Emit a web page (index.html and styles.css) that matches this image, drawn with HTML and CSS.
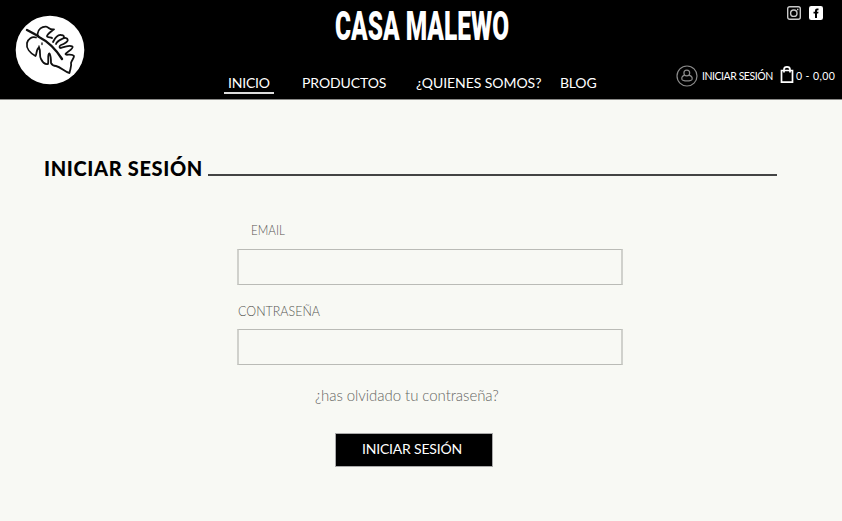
FILE: index.html
```html
<!DOCTYPE html>
<html lang="es">
<head>
<meta charset="utf-8">
<title>Casa Malewo</title>
<link rel="stylesheet" href="styles.css">
</head>
<body>
<header class="header">
  <a class="logo">
    <svg width="70" height="70" viewBox="0 0 70 70" fill="none" stroke="#111" stroke-linecap="round" stroke-linejoin="round">
      <circle cx="35" cy="35" r="34.3" fill="#fff" stroke="none"/>
      <path stroke-width="1.8" d="M22.500 19C23 14 27 11.500 31 11.700C34 12 34 15 39 14.300C37 16 33 18 32 21C32 23 36 22 37 23M38 27C40 23 43 19.500 46 20C49 20 50 22 48 23.500C45 25 42 26 41 29M48 23.500C50 22.500 52.500 23 52.500 24.500C54 26 49 29 46 30C44 31 44 33 46 33C49 32 54 29.500 57.500 31.500C59 34 51 37 50.500 39C50.500 41 57 38 59 41C59 43 57 45 56 48C57 51 55 54 54.500 58C50 57 46 52 41 51C38 51 37 50 36 48C36 45 36 41 34.500 38.500C32 39 34 46 33 49C29 50 27 46 26 44C24 41 26 36 24 32.500C21 34 22 39 20.500 41C15 38 11 33 12 28C13 24 17 21 21 22.500"/>
      <path stroke-width="2.4" d="M12 15C16 17 20 19 24 22C32 26 40 33 47 44"/>
      <path stroke-width="1.3" d="M27 28V29.500M24 31V32.500M22.500 19L24 22"/>
    </svg>
  </a>
  <div class="center">
    <h1 class="brand">CASA MALEWO</h1>
    <nav class="nav">
      <a class="inicio">INICIO</a>
      <a class="productos">PRODUCTOS</a>
      <a class="quienes">¿QUIENES SOMOS?</a>
      <a class="blog">BLOG</a>
    </nav>
  </div>
  <div class="side">
    <div class="social">
      <svg width="14" height="14" viewBox="0 0 14 14" fill="none" stroke="#c9c9c9" stroke-width="1.4"><rect x=".7" y=".7" width="12.600" height="12.600" rx="2"/><circle cx="6.800" cy="7.200" r="3.200"/><path d="M10 3.500h1.400"/></svg>
      <svg width="14" height="14" viewBox="0 0 14 14"><rect width="14" height="14" rx="2.200" fill="#fff"/><path fill="#000" d="M6 12V7.500H4.500V5.700H6V4.500Q6 2.500 8 2.500H9.500V4.200H8.700Q8 4.200 8 5V5.700H9.500L9.200 7.500H8V12Z"/></svg>
    </div>
    <div class="account">
      <svg class="user" width="22" height="22" viewBox="0 0 22 22" fill="none" stroke="#8b8b8b" stroke-width="1.200"><circle cx="11" cy="11" r="10"/><circle cx="10.800" cy="8" r="2.900"/><path d="M8.800 10.200C5.800 11 5.500 13 6 14.500C7 16.400 15 16.400 16 14.500C16.500 13 16.200 11 12.800 10.200"/></svg>
      <a class="login">INICIAR SESIÓN</a>
      <svg class="bag" width="14" height="18" viewBox="0 0 14 18" fill="none" stroke="#fff" stroke-width="1.700"><path d="M1.500 4.500H12.500V16.200H1.500ZM4 6.500V3.500C4 0 10 0 10 3.500V6.500"/></svg>
      <span class="total">0 - 0,00</span>
    </div>
  </div>
</header>
<main class="main">
  <div class="heading"><h2>INICIAR SESIÓN</h2><span class="rule"></span></div>
  <form class="form">
    <label class="label email" for="email">EMAIL</label>
    <input class="field" id="email" type="email">
    <label class="label password" for="password">CONTRASEÑA</label>
    <input class="field" id="password" type="password">
    <a class="forgot">¿has olvidado tu contraseña?</a>
    <button class="submit" type="button"><span>INICIAR SESIÓN</span></button>
  </form>
</main>
</body>
</html>
```
FILE: styles.css
```css
* { box-sizing: border-box; }
body { margin: 0; height: 521px; overflow: hidden; background: #f8f9f4; font-family: Lato, "Open Sans", sans-serif; }
a, span { white-space: nowrap; }
svg { display: block; flex: none; }
.header { display: grid; grid-template-columns: 224px 452px 166px; height: 100px; background: #000; color: #fff; border-bottom: 1px solid #8a8a88; }
.logo { padding: 15px 0 0 15px; }
.center { min-width: 0; }
.brand { margin: 2px 0 0 111px; width: 0; height: 71px; white-space: nowrap; font: 900 41px/48px Roboto, sans-serif; transform: scaleX(.596); transform-origin: 0 0; }
.nav { display: flex; font-size: 14px; line-height: 20px; }
.nav a { height: 21px; }
.inicio { width: 50px; padding-left: 4px; margin-right: 28px; border-bottom: 2px solid #ddd; letter-spacing: -.2px; }
.productos { width: 114px; letter-spacing: -.1px; }
.quienes { width: 144px; letter-spacing: -.05px; }
.blog { letter-spacing: -.2px; }
.social { display: flex; gap: 8px; padding: 6px 0 0 111px; }
.account { display: flex; align-items: center; height: 22px; margin-top: 45px; font-size: 10.5px; }
.login { width: 78px; padding-left: 4px; letter-spacing: -.45px; }
.bag { margin: -2px 0 0 4px; }
.total { padding-left: 2px; letter-spacing: .4px; }
.main { padding: 56px 65px 0 44px; }
.heading { display: flex; height: 24px; }
.heading h2 { margin: 0; width: 164px; font-size: 20px; line-height: 24px; font-weight: 900; letter-spacing: .65px; white-space: nowrap; color: #000; }
.rule { flex: 1; height: 2px; margin-top: 18px; background: #444; }
.form { display: flex; flex-direction: column; width: 386px; margin: 41px 0 0 193px; }
.label { align-self: flex-start; height: 20px; font-size: 14px; line-height: 18px; font-weight: 300; color: #555552; transform-origin: 0 0; }
.email { margin: 0 0 8px 14px; transform: scaleX(.83); }
.field { width: 386px; height: 36px; margin: 0; padding: 0 10px; border: 2px solid #d0d1cc; border-top: 1px solid #babbb6; border-bottom: 1px solid #babbb6; background: transparent; outline: 0; font: 14px Lato, sans-serif; }
.password { margin: 16px 0 8px 1px; line-height: 20px; transform: scaleX(.89); }
.forgot { margin: 20px 0 0 78px; font-size: 15px; line-height: 20px; font-weight: 300; letter-spacing: -.05px; color: #666663; }
.submit { width: 158px; height: 34px; margin: 28px 0 0 98px; padding: 0 0 3px 26px; border: 1px solid #aaa; background: #000; color: #fff; font: 14px Lato, sans-serif; letter-spacing: -.2px; text-align: left; }
```
